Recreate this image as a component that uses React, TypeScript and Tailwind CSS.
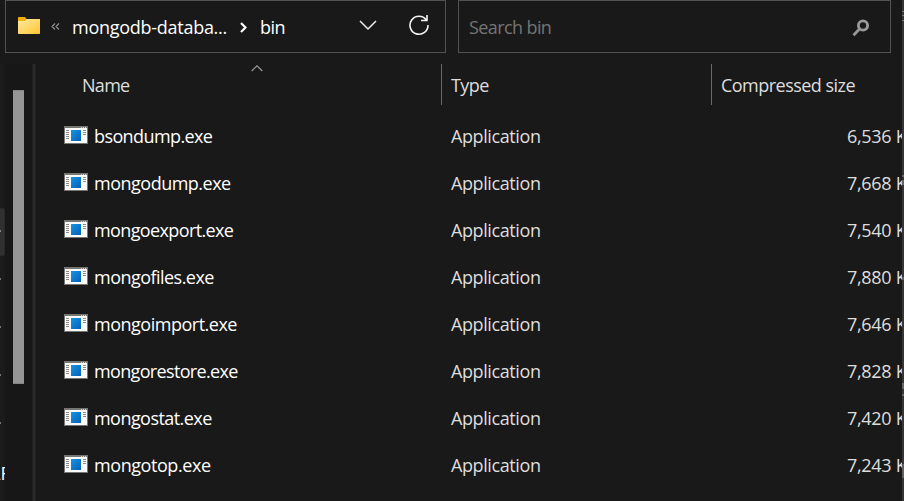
import React from "react";

const files = [
  { name: "bsondump.exe", size: "6,536", track: "tracking-[-0.6px]" },
  { name: "mongodump.exe", size: "7,668", track: "tracking-[-0.5px]" },
  { name: "mongoexport.exe", size: "7,540", track: "tracking-[-0.62px]" },
  { name: "mongofiles.exe", size: "7,880", track: "tracking-[-0.53px]" },
  { name: "mongoimport.exe", size: "7,646", track: "tracking-[-0.49px]" },
  { name: "mongorestore.exe", size: "7,828", track: "tracking-[-0.66px]" },
  { name: "mongostat.exe", size: "7,420", track: "tracking-[-0.55px]" },
  { name: "mongotop.exe", size: "7,243", track: "tracking-[-0.43px]" },
];

function ExeIcon() {
  return (
    <svg width="24" height="18" viewBox="0 0 24 18" shapeRendering="crispEdges" className="shrink-0">
      <defs>
        <linearGradient id="exe" x1="0" y1="0" x2="1" y2="1">
          <stop offset="0" stopColor="#1595e6" />
          <stop offset="1" stopColor="#0560b5" />
        </linearGradient>
      </defs>
      <path fill="#777572" d="M0 0h24v18H0z" />
      <path fill="#fafafa" d="M1 2h22v15H1z" />
      <path fill="#d0d0d0" d="M17 1h1v1h-1zM19 1h1v1h-1zM21 1h1v1h-1z" />
      <path fill="url(#exe)" d="M7 4h10v11H7z" />
      <path fill="#8c8c8c" d="M2 4h3v1H2zM2 6h3v1H2zM2 8h3v1H2zM2 10h3v1H2zM2 12h3v1H2zM19 4h3v1h-3zM19 6h3v1h-3zM19 8h3v1h-3z" />
    </svg>
  );
}

function FolderIcon() {
  return (
    <svg width="22" height="17" viewBox="0 0 22 17" className="shrink-0">
      <defs>
        <linearGradient id="folder" x1="0" y1="0" x2="1" y2="1">
          <stop offset="0" stopColor="#ffe9a2" />
          <stop offset="1" stopColor="#fec62f" />
        </linearGradient>
      </defs>
      <path fill="#f3ae0b" d="M0 .7Q0 0 .7 0H7l1.500 2H21.300q.7 0 .7.7V5H0z" />
      <path fill="url(#folder)" d="M0 4h7l2-2h13v14.300q0 .7-.7.7H.7q-.7 0-.7-.7z" />
    </svg>
  );
}

export default function App() {
  return (
    <div className="relative flex h-[501px] w-[904px] flex-col overflow-hidden bg-[#191919] font-['Open_Sans','Noto_Sans',sans-serif] text-[18px] leading-6 whitespace-nowrap text-[#dedede]">
      <header className="flex h-[53px] gap-3 pl-[5px]">
        <div className="flex w-[441px] items-center border border-[#535353] pl-3 text-white">
          <div className="-mt-0.5"><FolderIcon /></div>
          <svg width="9" height="7" viewBox="0 0 9 7" className="ml-[11px] shrink-0" fill="none" stroke="#929292" strokeWidth="1.1">
            <path d="M4 .5 1 3.500l3 3M8 .5 5 3.500l3 3" />
          </svg>
          <span className="ml-3 w-[156px] shrink-0 tracking-[-0.27px]">mongodb-databa...</span>
          <svg width="7" height="11" viewBox="0 0 7 11" className="mt-0.5 ml-3 shrink-0" fill="none" stroke="#fff" strokeWidth="2.200">
            <path d="m1 1 4.500 4.500L1 10" />
          </svg>
          <span className="ml-[13px] w-[26px] shrink-0 tracking-[-0.5px]">bin</span>
          <svg width="18" height="11" viewBox="0 0 18 11" className="-mt-0.5 ml-[73px] shrink-0" fill="none" stroke="#f0f0f0" strokeWidth="1.500">
            <path d="m1 1 8 8 8-8" />
          </svg>
          <svg width="22" height="22" viewBox="0 0 22 22" className="-mt-1 ml-[31px] shrink-0" fill="none" stroke="#f4f4f4" strokeWidth="1.600">
            <path d="M18.300 6A9 9 0 1 0 20 11M13 6.500h6V1" />
          </svg>
        </div>
        <div className="flex w-[433px] items-center justify-between border border-[#535353] pr-5 pl-2.5">
          <span className="tracking-[-0.6px] text-[#747474]">Search bin</span>
          <svg width="18" height="18" viewBox="0 0 18 18" fill="none" stroke="#999" className="mt-0.5">
            <circle cx="11" cy="6.500" r="4.600" strokeWidth="2.900" />
            <path d="m7.500 10-6 6.200" strokeWidth="2.800" />
          </svg>
        </div>
      </header>
      <main className="flex flex-1 pt-[11px]">
        <aside className="flex w-9 shrink-0 bg-[#171717]">
          <div className="flex h-full w-[5px] flex-col overflow-hidden bg-[#1b1b1b]">
            <div className="mt-36 flex h-12 shrink-0 items-center rounded-r-[2px] border border-l-0 border-[#292929] bg-[#303030]">
              <div className="-mt-0.5 h-0.5 w-px bg-[#888]" />
            </div>
            <div className="mt-[22px] h-0.5 w-px shrink-0 bg-[#777]" />
            <div className="mt-[46px] h-0.5 w-px shrink-0 bg-[#777]" />
            <div className="mt-[46px] h-0.5 w-px shrink-0 bg-[#777]" />
            <div className="mt-[46px] h-0.5 w-px shrink-0 bg-[#777]" />
            <div className="mt-[37px] h-6 shrink-0"><span className="-ml-[11px] block text-white">AF</span></div>
          </div>
          <div className="mt-[26px] ml-2 h-[294px] w-[11px] border-y border-[#858585] bg-[#969696]" />
          <div className="ml-2 h-full w-1 border-x border-[#202020] bg-[#2a2a2a]" />
        </aside>
        <section className="flex min-w-0 flex-1 flex-col pl-7">
          <div className="flex h-[41px]">
            <div className="relative w-[378px] shrink-0 border-r border-[#686868] pt-[9px] pl-[18px]">
              <span className="tracking-[-0.7px]">Name</span>
              <svg width="12" height="7" viewBox="0 0 12 7" className="absolute top-px left-[187px]" fill="none" stroke="#9a9a9a" strokeWidth="1.200">
                <path d="m.7 6 5.300-5.200L11.300 6" />
              </svg>
            </div>
            <div className="w-[270px] shrink-0 border-r border-[#686868] pt-[9px] pl-[9px]"><span className="tracking-[-0.6px]">Type</span></div>
            <div className="pt-[9px] pl-[9px]"><span className="tracking-[-0.53px]">Compressed size</span></div>
          </div>
          <div className="pt-[7px]">
            {files.map((file) => (
              <div key={file.name} className="flex h-[47px] items-center">
                <div className="flex w-[387px] shrink-0 items-center">
                  <div className="-mt-0.5 flex"><ExeIcon /></div>
                  <span className={`ml-1.5 text-white ${file.track}`}>{file.name}</span>
                </div>
                <span className="w-[396px] shrink-0 tracking-[-0.4px]">Application</span>
                <span className="w-14 shrink-0 overflow-hidden tracking-[-0.3px]">{file.size} KB</span>
              </div>
            ))}
          </div>
        </section>
      </main>
      <div className="absolute top-0 right-0 flex h-full w-0.5 flex-col bg-[#363636]">
        <div className="mt-[11px] h-px bg-[#777]" />
        <div className="mt-[3px] h-px bg-[#777]" />
        <div className="mt-[4px] h-px bg-[#777]" />
        <div className="mt-[154px] h-[2px] bg-[#666]" />
        <div className="mt-[3px] h-[5px] bg-[#666]" />
        <div className="mt-[92px] h-[3px] bg-[#606060]" />
        <div className="mt-[103px] h-[6px] bg-[#666]" />
        <div className="mt-[5px] h-[2px] bg-[#666]" />
        <div className="mt-[68px] h-[14px] bg-[#606060]" />
      </div>
    </div>
  );
}
